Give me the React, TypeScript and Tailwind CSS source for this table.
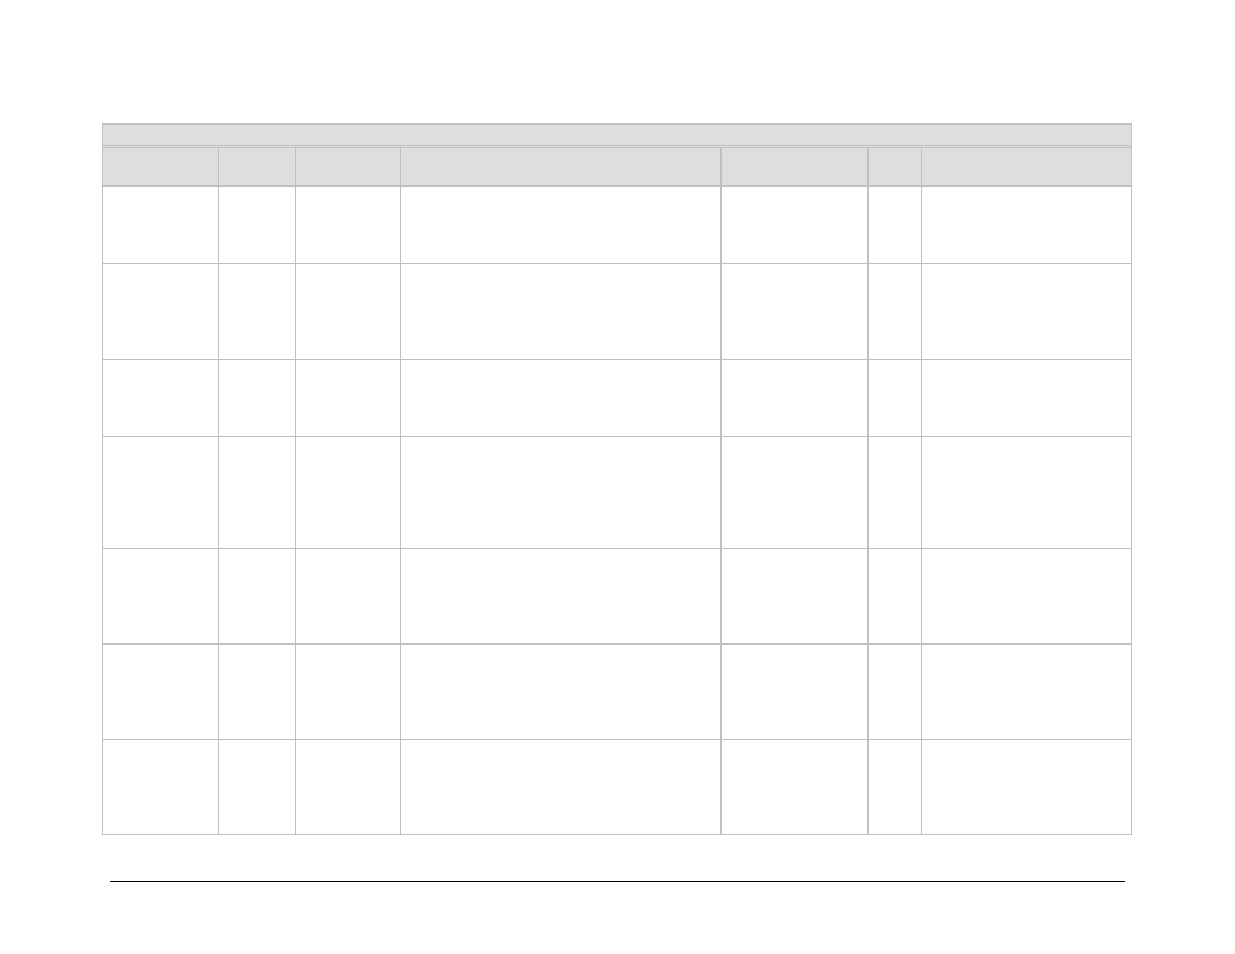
import React from "react";

const cols = [
  "w-[116px] border-r",
  "w-[77px] border-r",
  "w-[105px] border-r",
  "w-[321px] border-r-2",
  "w-[147px] border-r-2",
  "w-[53px] border-r",
  "flex-1",
];

const rows = [
  "h-[77px] border-b",
  "h-[96px] border-b",
  "h-[77px] border-b",
  "h-[112px] border-b",
  "h-[96px] border-b-2",
  "h-[95px] border-b",
  "h-[94px]",
];

function Cells({ header }: { header?: boolean }) {
  return (
    <>
      {cols.map((c, i) => (
        <div
          key={i}
          className={`${c} h-full border-[#c0c0c0] ${header ? "bg-[#dedede]" : "bg-white"}`}
        />
      ))}
    </>
  );
}

export default function App() {
  return (
    <div className="w-[1235px] h-[954px] bg-white" style={{ fontFamily: '"Liberation Sans", Arial, sans-serif' }}>
      <div className="pt-[123px] pl-[102px]">
        <div className="w-[1030px] border-t-2 border-x border-b border-[#c0c0c0]">
          <div className="h-[20px] bg-[#dedede]" />
          <div className="h-px bg-[#c0c0c0]" />
          <div className="h-px bg-[#dedede]" />
          <div className="flex h-[40px] border-t border-b-2 border-[#c0c0c0]">
            <Cells header />
          </div>
          {rows.map((r, i) => (
            <div key={i} className={`flex ${r} border-[#c0c0c0]`}>
              <Cells />
            </div>
          ))}
        </div>
      </div>
      <div className="mt-[46px] ml-[110px] w-[1015px] h-px bg-black" />
    </div>
  );
}
